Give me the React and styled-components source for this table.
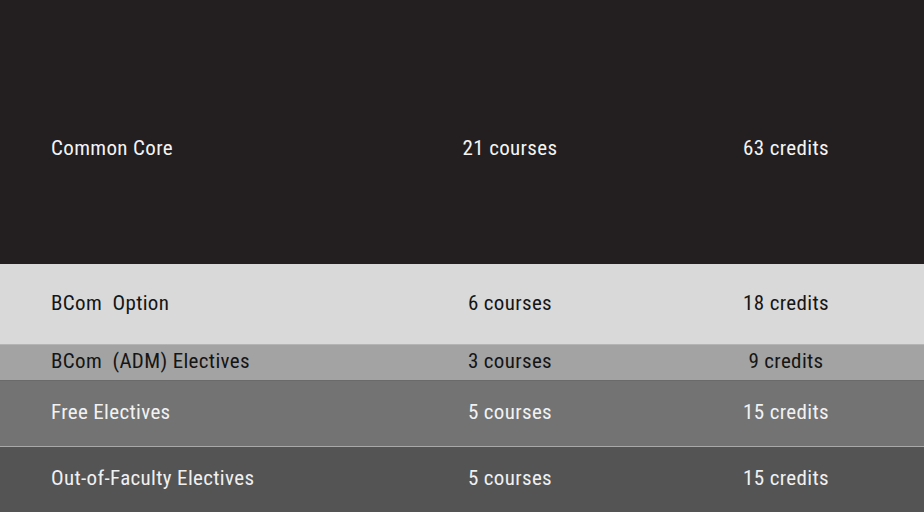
import React from "react";
import styled, { createGlobalStyle } from "styled-components";

const GlobalStyle = createGlobalStyle`
  html, body {
    margin: 0;
    padding: 0;
    background: #545454;
  }
  body {
    font-family: "Roboto Condensed", Roboto, "Liberation Sans", sans-serif;
  }
`;

const rows = [
  { label: "Common Core", courses: "21 courses", credits: "63 credits", bg: "#231f20", fg: "#f4f4f4", height: 264, top: 32, bottom: 0 },
  { label: "BCom  Option", courses: "6 courses", credits: "18 credits", bg: "#d9d9d9", fg: "#151515", height: 80 },
  { label: "BCom  (ADM) Electives", courses: "3 courses", credits: "9 credits", bg: "#a3a3a3", fg: "#151515", height: 36, line: "#b4b4b4" },
  { label: "Free Electives", courses: "5 courses", credits: "15 credits", bg: "#737373", fg: "#f2f2f2", height: 66, line: "#6a6a6a" },
  { label: "Out-of-Faculty Electives", courses: "5 courses", credits: "15 credits", bg: "#545454", fg: "#f0f0f0", height: 66, line: "#a9a9a9" },
];

const Table = styled.div`
  width: 924px;
  height: 512px;
  overflow: hidden;
  display: flex;
  flex-direction: column;
`;

const Row = styled.div`
  display: grid;
  grid-template-columns: 1fr 180px 180px;
  column-gap: 96px;
  align-items: center;
  box-sizing: border-box;
  height: ${(p) => p.$height}px;
  padding: ${(p) => p.$top ?? 0}px 48px ${(p) => p.$bottom ?? 3}px 51px;
  background: ${(p) => p.$bg};
  color: ${(p) => p.$fg};
  border-top: ${(p) => (p.$line ? `1px solid ${p.$line}` : "none")};
  font-size: 21px;
  font-stretch: condensed;
  letter-spacing: 0.35px;
`;

const Label = styled.span`
  white-space: pre;
`;

const Count = styled.span`
  text-align: center;
  white-space: nowrap;
`;

export default function App() {
  return (
    <>
      <GlobalStyle />
      <Table>
        {rows.map((r) => (
          <Row
            key={r.label}
            $height={r.height}
            $top={r.top}
            $bottom={r.bottom}
            $bg={r.bg}
            $fg={r.fg}
            $line={r.line}
          >
            <Label>{r.label}</Label>
            <Count>{r.courses}</Count>
            <Count>{r.credits}</Count>
          </Row>
        ))}
      </Table>
    </>
  );
}
